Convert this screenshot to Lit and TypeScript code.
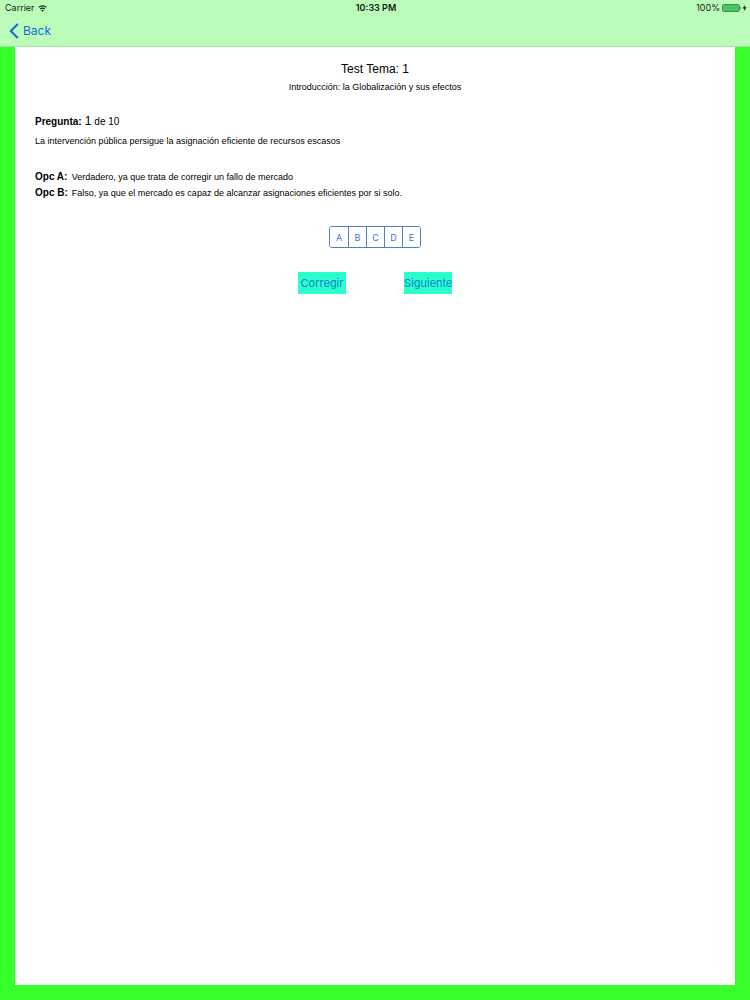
import { LitElement, html, css } from "lit";
import { customElement, state } from "lit/decorators.js";

@customElement("status-bar")
class StatusBar extends LitElement {
  static styles = css`
    :host {
      display: grid;
      grid-template-columns: 1fr auto 1fr;
      align-items: center;
      height: 16px;
      padding: 0 3px 0 5px;
      font: 9px/16px Inter, "Liberation Sans", sans-serif;
      color: #10280f;
    }
    .side { display: flex; align-items: center; gap: 3px; }
    .end { justify-content: flex-end; gap: 2px; }
    .time { font-weight: 600; color: #0b1c0a; }
    svg { display: block; }
  `;

  render() {
    return html`
      <div class="side">
        <span>Carrier</span>
        <svg width="9" height="7" viewBox="0 0 20 16" fill="none" stroke="#10280f" stroke-width="2.6" aria-hidden="true">
          <path d="M1.2 5.6a12.6 12.6 0 0 1 17.6 0" />
          <path d="M4.6 9.4a7.6 7.6 0 0 1 10.8 0" />
          <path d="M10 15.6l-3.2-3.4a4.6 4.6 0 0 1 6.4 0z" fill="#10280f" stroke="none" />
        </svg>
      </div>
      <span class="time">10:33 PM</span>
      <div class="side end">
        <span>100%</span>
        <svg width="25" height="8" viewBox="0 0 25 8" aria-hidden="true">
          <rect x="0.5" y="0.5" width="17" height="7" rx="1" fill="#b9fcb9" stroke="#4a8a50" />
          <rect x="1" y="1" width="16" height="6" rx="0.5" fill="#45c765" />
          <path d="M18.2 2.6q1.4 1.4 0 2.8z" fill="#26482a" />
          <path d="M23.4 0.6l-3 4h2l-.7 3 3.1-4.3h-2.1z" fill="#10280f" />
        </svg>
      </div>
    `;
  }
}

@customElement("app-root")
class AppRoot extends LitElement {
  @state() private answer = "";

  private options = [
    { id: "A", text: "Verdadero, ya que trata de corregir un fallo de mercado" },
    { id: "B", text: "Falso, ya que el mercado es capaz de alcanzar asignaciones eficientes por si solo." },
  ];

  static styles = css`
    :host {
      display: flex;
      flex-direction: column;
      box-sizing: border-box;
      min-height: 100vh;
      background: #36ff2b;
      color: #000;
      font: 9px/16px "Liberation Sans", Arial, sans-serif;
    }
    header {
      background: #bbfcba;
      border-bottom: 1px solid #a5dfa4;
    }
    nav { display: flex; height: 30px; align-items: center; padding: 0 9px; }
    .back {
      display: flex;
      align-items: center;
      gap: 4px;
      color: #1668d8;
      text-decoration: none;
      font: 12px/16px Inter, sans-serif;
    }
    .back svg { display: block; }
    main {
      flex: 1;
      margin: 0 15px 15px;
      padding: 12px 20px;
      background: #fff;
    }
    h1, h2, p, dl, dd { margin: 0; font-weight: 400; }
    h1 { font-size: 12px; line-height: 20px; text-align: center; }
    .topic { text-align: center; }
    .counter {
      display: flex;
      align-items: baseline;
      gap: 3px;
      margin-top: 16px;
      font-size: 10px;
      line-height: 20px;
    }
    .number { font-size: 12px; }
    .question { margin-top: 1px; }
    .options {
      display: grid;
      grid-template-columns: auto 1fr;
      column-gap: 4px;
      margin-top: 20px;
    }
    dt, b { font-size: 10px; font-weight: 700; }
    .segments {
      display: flex;
      width: max-content;
      margin: 25px auto 0;
      border: 1px solid #4c7fcb;
      border-radius: 3px;
      overflow: hidden;
    }
    button {
      margin: 0;
      padding: 0;
      border: 0;
      border-radius: 0;
      cursor: pointer;
      font-family: Inter, sans-serif;
    }
    .segment {
      box-sizing: border-box;
      width: 18px;
      height: 20px;
      background: #fff;
      color: #3f76c9;
      font-size: 9px;
    }
    .segment + .segment { border-left: 1px solid #4c7fcb; }
    .segment[aria-pressed="true"] { background: #4c7fcb; color: #fff; }
    .actions {
      display: flex;
      justify-content: center;
      gap: 58px;
      margin-top: 24px;
    }
    .action {
      width: 48px;
      height: 22px;
      background: #2bffcc;
      color: #0f7fd2;
      font-size: 11px;
      white-space: nowrap;
    }
  `;

  render() {
    return html`
      <header>
        <status-bar></status-bar>
        <nav>
          <a class="back" href="#">
            <svg width="10" height="16" viewBox="0 0 10 16" fill="none" stroke="#1668d8" stroke-width="2" aria-hidden="true">
              <path d="M8.8 1L1.8 8l7 7" />
            </svg>
            Back
          </a>
        </nav>
      </header>
      <main>
        <h1>Test Tema: 1</h1>
        <p class="topic">Introducción: la Globalización y sus efectos</p>
        <p class="counter"><b>Pregunta:</b><span class="number">1</span><span>de 10</span></p>
        <p class="question">La intervención pública persigue la asignación eficiente de recursos escasos</p>
        <dl class="options">
          ${this.options.map((o) => html`<dt>Opc ${o.id}:</dt><dd>${o.text}</dd>`)}
        </dl>
        <div class="segments" role="group" aria-label="Respuesta">
          ${["A", "B", "C", "D", "E"].map(
            (id) => html`<button
              class="segment"
              type="button"
              aria-pressed=${this.answer === id ? "true" : "false"}
              @click=${() => (this.answer = id)}
            >${id}</button>`
          )}
        </div>
        <div class="actions">
          <button class="action" type="button">Corregir</button>
          <button class="action" type="button">Siguiente</button>
        </div>
      </main>
    `;
  }
}
